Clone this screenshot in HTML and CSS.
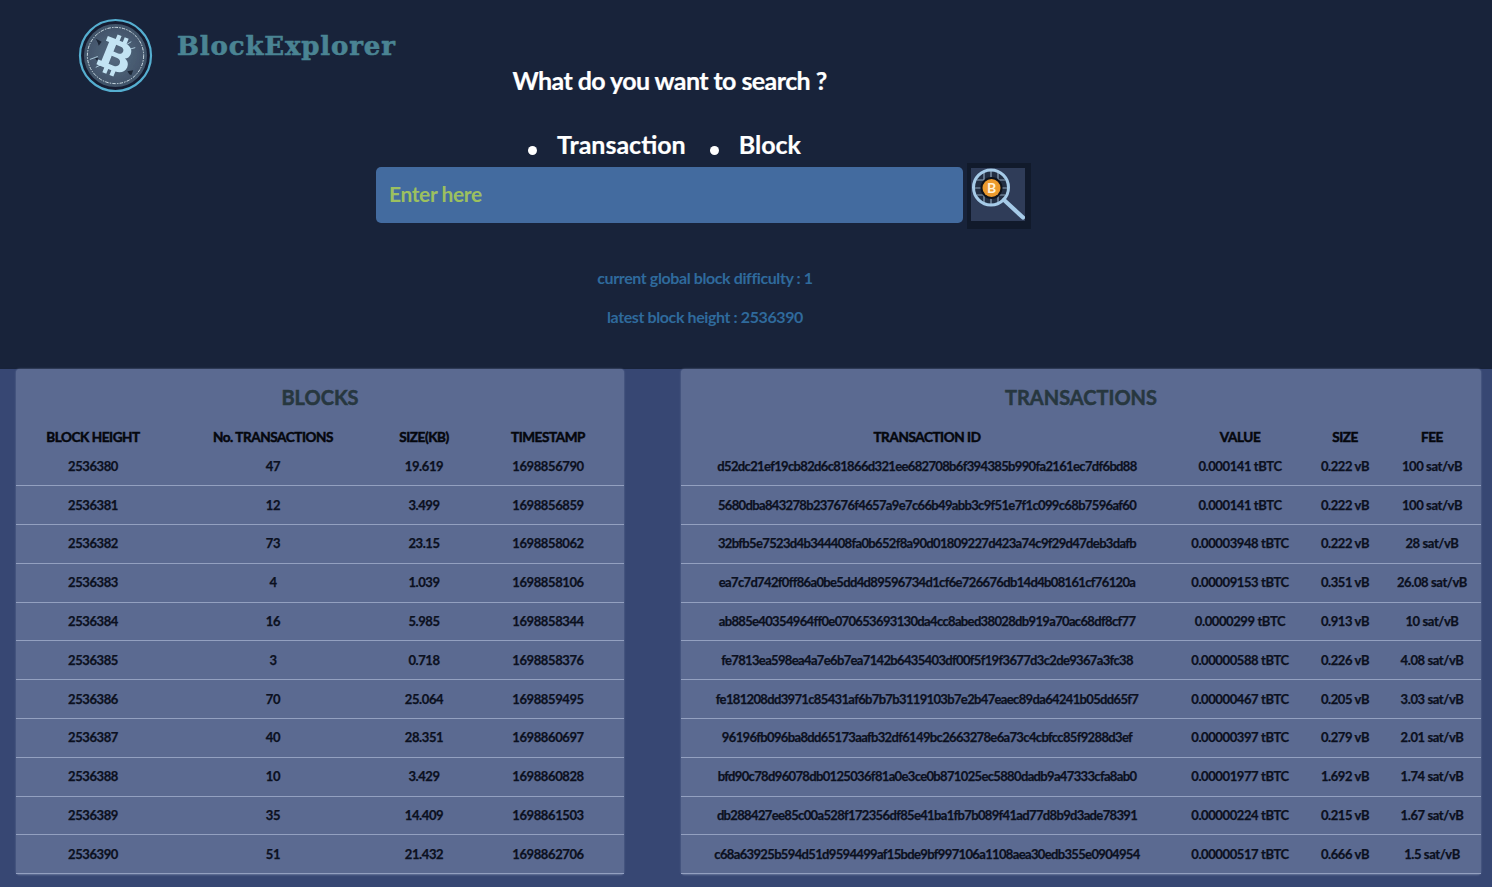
FILE: index.html
```html
<!doctype html>
<html lang="en">
<head>
<meta charset="utf-8">
<title>BlockExplorer</title>
<link rel="stylesheet" href="styles.css">
</head>
<body>
<header class="top">
  <div class="brand">
    <svg class="logo" viewBox="0 0 76 76" aria-hidden="true">
      <defs>
        <radialGradient id="coin" cx="50%" cy="50%" r="55%"><stop offset="0" stop-color="#566a80"/><stop offset="1" stop-color="#3e5066"/></radialGradient>
        <filter id="soft" x="-5%" y="-5%" width="110%" height="110%"><feGaussianBlur stdDeviation="0.35"/></filter>
      </defs>
      <g filter="url(#soft)">
        <circle cx="38" cy="38" r="36" fill="#151e30" stroke="#55aed0" stroke-width="2.2"/>
        <circle cx="38" cy="38" r="32" fill="url(#coin)"/>
        <circle cx="38" cy="38" r="28.500" fill="none" stroke="#dcebf2" stroke-width="0.9" stroke-dasharray="3.5 1.2 1.5 1.2"/>
        <g transform="translate(38 38) rotate(22) scale(0.86) translate(-18 -24)">
          <path fill="#c3e3f3" fill-rule="evenodd" d="M11 0h5v6h4V0h5v6.400c6 1.200 9 4.600 9 9.400 0 3.600-1.600 6-4.400 7.400 3.800 1.200 6.400 4 6.400 8.400 0 6-4.600 9.400-11 10V48h-5v-6h-4v6h-5v-6H1v-6h4V12H1V6h10zM14 12v8.600h6c2.600 0 4.600-1.600 4.600-4.300 0-2.800-2-4.300-4.600-4.300zM14 26v10h7c3 0 5.200-2 5.200-5s-2.200-5-5.200-5z"/>
        </g>
        <path d="M18 21l6 3-3 4-1-3zM50 54l6-1-2 5-2-1zM17 40l4 1-2 2z" fill="#1c2636"/>
        <path d="M12 42l8-3M18 50l6-3M58 30l-7 2M54 24l-5 3" fill="none" stroke="#c3e3f3" stroke-width="0.8"/>
      </g>
    </svg>
    <span class="brand-name">BlockExplorer</span>
  </div>
  <h2 class="question">What do you want to search ?</h2>
  <form class="search">
    <div class="choices">
      <label class="choice"><input class="radio" type="radio" name="kind">Transaction</label>
      <label class="choice"><input class="radio" type="radio" name="kind">Block</label>
    </div>
    <div class="search-row">
      <input class="field" type="text" placeholder="Enter here">
      <button class="go" type="button" aria-label="Search">
        <svg class="go-icon" viewBox="0 0 54 53" aria-hidden="true">
          <circle cx="20" cy="19.500" r="17" fill="#222e42"/>
          <path d="M13 4v9M20 3v7M27 4v9M6 12h8M34 12h-8M4 20h7M36 20h-7M6 27h8M34 27h-8M13 35v-8M20 36v-7M27 35v-8" fill="none" stroke="#8ea3ba" stroke-width="1.200"/>
          <circle cx="20.500" cy="20" r="11" fill="#0e131c"/>
          <circle cx="20.500" cy="20" r="9" fill="#ec9a2d"/>
          <text class="go-mark" x="20.500" y="24.800" text-anchor="middle">B</text>
          <circle cx="20" cy="19.500" r="17.500" fill="none" stroke="#a6cbe8" stroke-width="3"/>
          <path d="M33 32l19 17.500" fill="none" stroke="#a6cbe8" stroke-width="4.200" stroke-linecap="round"/>
        </svg>
      </button>
    </div>
  </form>
  <div class="stats">
    <p class="stat">current global block difficulty : 1</p>
    <p class="stat">latest block height : 2536390</p>
  </div>
</header>
<main class="board">
  <section class="card blocks">
    <h3 class="card-title">BLOCKS</h3>
    <table class="grid">
      <colgroup><col class="b1"><col class="b2"><col class="b3"><col class="b4"></colgroup>
      <thead><tr><th>BLOCK HEIGHT</th><th>No. TRANSACTIONS</th><th>SIZE(KB)</th><th>TIMESTAMP</th></tr></thead>
      <tbody>
        <tr><td>2536380</td><td>47</td><td>19.619</td><td>1698856790</td></tr>
        <tr><td>2536381</td><td>12</td><td>3.499</td><td>1698856859</td></tr>
        <tr><td>2536382</td><td>73</td><td>23.15</td><td>1698858062</td></tr>
        <tr><td>2536383</td><td>4</td><td>1.039</td><td>1698858106</td></tr>
        <tr><td>2536384</td><td>16</td><td>5.985</td><td>1698858344</td></tr>
        <tr><td>2536385</td><td>3</td><td>0.718</td><td>1698858376</td></tr>
        <tr><td>2536386</td><td>70</td><td>25.064</td><td>1698859495</td></tr>
        <tr><td>2536387</td><td>40</td><td>28.351</td><td>1698860697</td></tr>
        <tr><td>2536388</td><td>10</td><td>3.429</td><td>1698860828</td></tr>
        <tr><td>2536389</td><td>35</td><td>14.409</td><td>1698861503</td></tr>
        <tr><td>2536390</td><td>51</td><td>21.432</td><td>1698862706</td></tr>
      </tbody>
    </table>
  </section>
  <section class="card txs">
    <h3 class="card-title">TRANSACTIONS</h3>
    <table class="grid">
      <colgroup><col class="t1"><col class="t2"><col class="t3"><col class="t4"></colgroup>
      <thead><tr><th>TRANSACTION ID</th><th>VALUE</th><th>SIZE</th><th>FEE</th></tr></thead>
      <tbody>
        <tr><td class="hash">d52dc21ef19cb82d6c81866d321ee682708b6f394385b990fa2161ec7df6bd88</td><td>0.000141 tBTC</td><td>0.222 vB</td><td>100 sat/vB</td></tr>
        <tr><td class="hash">5680dba843278b237676f4657a9e7c66b49abb3c9f51e7f1c099c68b7596af60</td><td>0.000141 tBTC</td><td>0.222 vB</td><td>100 sat/vB</td></tr>
        <tr><td class="hash">32bfb5e7523d4b344408fa0b652f8a90d01809227d423a74c9f29d47deb3dafb</td><td>0.00003948 tBTC</td><td>0.222 vB</td><td>28 sat/vB</td></tr>
        <tr><td class="hash">ea7c7d742f0ff86a0be5dd4d89596734d1cf6e726676db14d4b08161cf76120a</td><td>0.00009153 tBTC</td><td>0.351 vB</td><td>26.08 sat/vB</td></tr>
        <tr><td class="hash">ab885e40354964ff0e070653693130da4cc8abed38028db919a70ac68df8cf77</td><td>0.0000299 tBTC</td><td>0.913 vB</td><td>10 sat/vB</td></tr>
        <tr><td class="hash">fe7813ea598ea4a7e6b7ea7142b6435403df00f5f19f3677d3c2de9367a3fc38</td><td>0.00000588 tBTC</td><td>0.226 vB</td><td>4.08 sat/vB</td></tr>
        <tr><td class="hash">fe181208dd3971c85431af6b7b7b3119103b7e2b47eaec89da64241b05dd65f7</td><td>0.00000467 tBTC</td><td>0.205 vB</td><td>3.03 sat/vB</td></tr>
        <tr><td class="hash">96196fb096ba8dd65173aafb32df6149bc2663278e6a73c4cbfcc85f9288d3ef</td><td>0.00000397 tBTC</td><td>0.279 vB</td><td>2.01 sat/vB</td></tr>
        <tr><td class="hash">bfd90c78d96078db0125036f81a0e3ce0b871025ec5880dadb9a47333cfa8ab0</td><td>0.00001977 tBTC</td><td>1.692 vB</td><td>1.74 sat/vB</td></tr>
        <tr><td class="hash">db288427ee85c00a528f172356df85e41ba1fb7b089f41ad77d8b9d3ade78391</td><td>0.00000224 tBTC</td><td>0.215 vB</td><td>1.67 sat/vB</td></tr>
        <tr><td class="hash">c68a63925b594d51d9594499af15bde9bf997106a1108aea30edb355e0904954</td><td>0.00000517 tBTC</td><td>0.666 vB</td><td>1.5 sat/vB</td></tr>
      </tbody>
    </table>
  </section>
</main>
</body>
</html>
```
FILE: styles.css
```css
* { box-sizing: border-box; }
html, body { margin: 0; }
body {
  background: #18233a;
  color: #fff;
  font-family: "Lato", "Open Sans", sans-serif;
  font-weight: 700;
  overflow: hidden;
}
.top { height: 369px; }
.brand {
  display: flex;
  align-items: flex-start;
  gap: 24px;
  height: 63px;
  padding: 18px 0 0 78px;
}
.logo { width: 75px; height: 75px; flex: none; }
.brand-name {
  font-family: "DejaVu Serif", serif;
  font-weight: 700;
  font-size: 26px;
  line-height: 56px;
  color: #4a8493;
  letter-spacing: 0.85px;
  -webkit-text-stroke: 0.6px #4a8493;
}
.question {
  width: 1339px;
  margin: 0;
  text-align: center;
  font-size: 25px;
  line-height: 34px;
  font-weight: 700;
  letter-spacing: -0.57px;
  -webkit-text-stroke: 0.2px #fff;
}
.search {
  display: flex;
  flex-direction: column;
  padding: 24px 0 0 376px;
}
.choices { display: flex; height: 40px; padding: 6px 0 0 152px; gap: 24px; }
.choice {
  display: flex;
  align-items: center;
  gap: 20px;
  font-size: 25px;
  -webkit-text-stroke: 0.2px #fff;
}
.radio {
  appearance: none;
  width: 9px;
  height: 9px;
  margin: 12px 0 0;
  border-radius: 50%;
  background: #fff;
}
.search-row { display: flex; align-items: center; gap: 4px; }
.field {
  width: 587px;
  height: 56px;
  padding: 0 13px 3px;
  border: 0;
  border-radius: 5px;
  background: #436b9f;
  font: 700 21px "Lato", sans-serif;
  letter-spacing: -0.4px;
  color: #9cc05f;
}
.field::placeholder { color: #9cc05f; opacity: 1; }
.go {
  display: flex;
  width: 64px;
  height: 66px;
  margin-top: 2px;
  padding: 5px 6px 8px 4px;
  border: 0;
  background: #111a2b;
}
.go-icon { width: 54px; height: 53px; background: #2f3c58; display: block; }
.go-mark { font: 700 14px "Lato", sans-serif; fill: #fff2d8; }
.stats { width: 1410px; padding-top: 38px; text-align: center; }
.stat {
  margin: 0 0 17px;
  font-size: 16px;
  line-height: 22px;
  letter-spacing: -0.4px;
  color: #2f6a9c;
}
.board {
  display: flex;
  gap: 57px;
  height: 518px;
  padding: 0 11px 12px 16px;
  background: #374773;
}
.card {
  border-radius: 4px;
  background: #5b6a91;
  box-shadow: 0 0 2px #6b7a9f;
}
.blocks { flex: 0 0 608px; }
.txs { flex: 1; }
.card-title {
  margin: 0;
  height: 58px;
  padding-top: 14px;
  text-align: center;
  font-size: 20px;
  line-height: 28px;
  font-weight: 700;
  color: #27373f;
  -webkit-text-stroke: 0.5px #27373f;
}
.grid { width: 100%; border-collapse: collapse; table-layout: fixed; }
.grid th {
  height: 20px;
  padding: 0;
  font-size: 13.5px;
  font-weight: 700;
  line-height: 20px;
  color: #05070d;
  letter-spacing: -0.4px;
  -webkit-text-stroke: 0.5px #05070d;
}
.grid td {
  height: 38.8px;
  padding: 0 0 1px;
  border-bottom: 1px solid #93a0c0;
  text-align: center;
  font-size: 13px;
  font-weight: 700;
  color: #0b1020;
  letter-spacing: -0.4px;
  -webkit-text-stroke: 0.25px #0b1020;
}
.grid .hash { letter-spacing: -0.65px; }
.b1 { width: 154px; } .b2 { width: 206px; } .b3 { width: 96px; } .b4 { width: 152px; }
.t1 { width: 492px; } .t2 { width: 134px; } .t3 { width: 76px; } .t4 { width: 98px; }
```
